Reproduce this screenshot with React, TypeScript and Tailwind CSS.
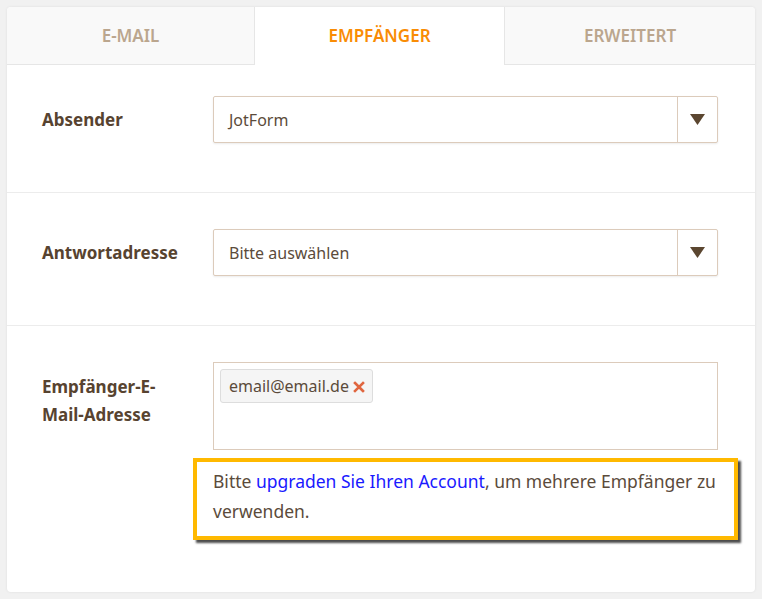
const FONT = "font-['Noto_Sans','Open_Sans',sans-serif]";

function Tab({ label, active, side }: { label: string; active?: boolean; side?: "l" | "r" }) {
  if (active) {
    return (
      <div className="flex items-center justify-center bg-white text-[17px] font-semibold text-[#f98c05]">
        {label}
      </div>
    );
  }
  return (
    <div
      className={`flex items-center justify-center bg-[#f9f9f9] border-b border-[#e6e6e6] text-[17px] font-semibold text-[#bba68e] ${
        side === "r" ? "border-r" : "border-l"
      }`}
    >
      {label}
    </div>
  );
}

function Select({ value }: { value: string }) {
  return (
    <div className="flex h-[47px] flex-1 items-stretch rounded-[2px] border border-[#dccbbb] bg-white shadow-[0_1px_2px_rgba(0,0,0,0.08)]">
      <div className="flex flex-1 items-center pl-[15px] text-[16px] text-[#5b4b3b]">{value}</div>
      <div className="flex w-[40px] items-center justify-center border-l border-[#dccbbb]">
        <svg width="15" height="11" viewBox="0 0 15 11">
          <path d="M0 0 L15 0 L7.5 11 Z" fill="#5b4630" />
        </svg>
      </div>
    </div>
  );
}

export default function App() {
  return (
    <div className={`h-[599px] w-[762px] bg-[#f1f1f1] p-[7px] ${FONT}`}>
      <div className="flex h-[585px] flex-col overflow-hidden rounded-[4px] bg-white shadow-[0_0_3px_rgba(0,0,0,0.08)]">
        <div className="grid h-[58px] grid-cols-[248px_249px_1fr]">
          <Tab label="E-MAIL" side="r" />
          <Tab label="EMPFÄNGER" active />
          <Tab label="ERWEITERT" side="l" />
        </div>

        <div className="flex items-center border-b border-[#ececec] pl-[35px] pr-[37px] pt-[31px] pb-[49px]">
          <div className="w-[171px] text-[17px] font-bold text-[#574330]">Absender</div>
          <Select value="JotForm" />
        </div>

        <div className="flex items-center border-b border-[#ececec] pl-[35px] pr-[37px] pt-[36px] pb-[49px]">
          <div className="w-[171px] text-[17px] font-bold text-[#574330]">Antwortadresse</div>
          <Select value="Bitte auswählen" />
        </div>

        <div className="flex pl-[35px] pr-[37px] pt-[36px]">
          <div className="w-[171px] pr-[40px] pt-[11px] text-[17px] font-bold leading-[28px] text-[#574330]">
            Empfänger-E-Mail-Adresse
          </div>
          <div className="flex flex-1 flex-col">
            <div className="h-[88px] border border-[#dccbbb] bg-white p-[6px]">
              <span className="inline-flex h-[34px] items-center gap-[4px] rounded-[3px] border border-[#dddddd] bg-[#f5f5f5] pl-[8px] pr-[7px] text-[16px] text-[#5b4b3b]">
                email@email.de
                <svg width="12" height="12" viewBox="0 0 12 12" className="mt-[2px]">
                  <path d="M2 2 L10 10 M10 2 L2 10" stroke="#e0663f" strokeWidth="2.6" strokeLinecap="square" />
                </svg>
              </span>
            </div>
          </div>
        </div>

        <div className="ml-[186px] mr-[17px] mt-[8px] border-[4px] border-[#ffb900] bg-white pl-[16px] pr-[12px] pt-[4px] pb-[10px] text-[17.5px] leading-[30px] text-[#5b4b3b] shadow-[3px_3px_2px_rgba(0,0,0,0.7)]">
          Bitte <span className="text-[#1a1aff]">upgraden Sie Ihren Account</span>, um mehrere Empfänger zu
          verwenden.
        </div>
      </div>
    </div>
  );
}
